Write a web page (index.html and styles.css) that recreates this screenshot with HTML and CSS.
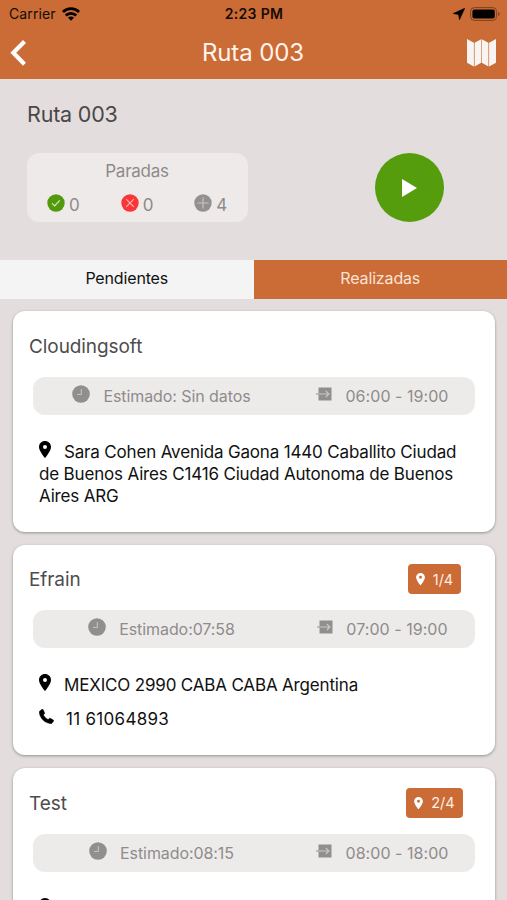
FILE: index.html
```html
<!DOCTYPE html>
<html lang="es">
<head>
  <meta charset="UTF-8" />
  <meta name="viewport" content="width=device-width, initial-scale=1.0" />
  <title>Ruta 003</title>
  <link rel="stylesheet" href="styles.css">
</head>
<body>
  <!-- Shared icons -->
  <svg class="sprite" aria-hidden="true">
    <symbol id="pin" viewBox="0 0 12 17">
      <path fill-rule="evenodd" d="M6 0C2.7 0 0 2.6 0 5.9C0 10 6 17 6 17S12 10 12 5.9C12 2.6 9.300 0 6 0ZM6 3.900A2 2 0 1 1 6 7.900A2 2 0 1 1 6 3.900Z" />
    </symbol>
    <symbol id="clock" viewBox="0 0 18 18">
      <circle cx="9" cy="9" r="8.800" />
      <path d="M9.300 4v5.500H5" fill="none" stroke="#c4c1c1" stroke-width="1.100" />
    </symbol>
    <symbol id="enter" viewBox="0 0 16 14">
      <path d="M2.500 0.500h13v13h-13z" />
      <path d="M0 7h3" stroke="#a5a2a2" stroke-width="1.300" />
      <path d="M3 7h10M9.800 4l3.200 3-3.200 3" fill="none" stroke="#cbc8c8" stroke-width="1.100" />
    </symbol>
  </svg>

  <header>
    <div class="status-bar">
      <div class="carrier">
        <span>Carrier</span>
        <svg width="18" height="14" viewBox="0 0 18 14">
          <g fill="none" stroke="#000" stroke-width="2.800">
            <path d="M0.900 5a11.500 11.500 0 0 1 16.200 0" />
            <path d="M3.800 8.500a7.400 7.400 0 0 1 10.400 0" />
          </g>
          <path d="M9 13.800l-3-3a4.200 4.200 0 0 1 6 0z" />
        </svg>
      </div>
      <div class="clock">2:23 PM</div>
      <div class="battery">
        <svg width="12" height="12" viewBox="0 0 12 12">
          <path d="M11.700 0.300L0.300 5.500L5.500 6.500L6.500 11.700Z" stroke="#000" stroke-width="0.600" />
        </svg>
        <svg width="30" height="14" viewBox="0 0 30 14">
          <rect x="0.600" y="0.600" width="26" height="12.800" rx="3.800" fill="none" stroke="#7d401f" stroke-width="1" />
          <rect x="2.400" y="2.400" width="22.400" height="9.200" rx="2" />
          <path d="M28.200 5v4q1.500-.7 1.500-2t-1.500-2z" fill="#7d401f" />
        </svg>
      </div>
    </div>
    <div class="nav-bar">
      <svg class="back" width="16" height="26" viewBox="0 0 16 26">
        <path d="M14.500 1.500L3.300 12.800L14.500 24.200" fill="none" stroke="#fff" stroke-width="4.200" />
      </svg>
      <h1>Ruta 003</h1>
      <svg class="map" width="29" height="28" viewBox="0 0 29 28">
        <path fill="#f8f4f2" d="M0 0L6.900 3.800V27.500L0 23.800ZM7.600 3.800L14.200 0.300V23.800L7.600 27.500ZM14.800 0.300L21.400 3.800V27.500L14.800 23.800ZM22.100 3.800L29 0V23.800L22.100 27.500Z" />
      </svg>
    </div>
  </header>

  <section class="summary">
    <h2>Ruta 003</h2>
    <div class="summary-row">
      <div class="stops">
        <div class="stops-title">Paradas</div>
        <div class="stops-counts">
          <div class="count">
            <svg width="18" height="18" viewBox="0 0 18 18">
              <circle cx="9" cy="9" r="8.700" fill="#529a0b" />
              <path d="M5 9.400l2.700 2.500 5-5.500" fill="none" stroke="#d6e8c3" stroke-width="1.200" />
            </svg>
            <span>0</span>
          </div>
          <div class="count">
            <svg width="18" height="18" viewBox="0 0 18 18">
              <circle cx="9" cy="9" r="8.700" fill="#fa3638" />
              <path d="M5.200 5.200l7.600 7.600M12.800 5.200l-7.600 7.600" stroke="#ffb9b5" stroke-width="1.100" />
            </svg>
            <span>0</span>
          </div>
          <div class="count">
            <svg width="18" height="18" viewBox="0 0 18 18">
              <circle cx="9" cy="9" r="8.700" fill="#929090" />
              <path d="M9 3.500v11M3.500 9h11" stroke="#c5c2c2" stroke-width="1.200" />
            </svg>
            <span>4</span>
          </div>
        </div>
      </div>
      <button class="play">
        <svg width="16" height="18" viewBox="0 0 16 18"><path d="M0 0L15 9L0 18Z" fill="#fff" /></svg>
      </button>
    </div>
  </section>

  <nav class="tabs">
    <div class="tab">Pendientes</div>
    <div class="tab active">Realizadas</div>
  </nav>

  <main>
    <article class="card">
      <div class="card-head">
        <h3>Cloudingsoft</h3>
      </div>
      <div class="times">
        <div class="time">
          <svg class="icon-clock"><use href="#clock" /></svg>
          <span>Estimado: Sin datos</span>
        </div>
        <div class="time">
          <svg class="icon-enter"><use href="#enter" /></svg>
          <span>06:00 - 19:00</span>
        </div>
      </div>
      <p class="address"><svg class="icon-pin"><use href="#pin" /></svg>Sara Cohen Avenida Gaona 1440 Caballito Ciudad<br>de Buenos Aires C1416 Ciudad Autonoma de Buenos<br>Aires ARG</p>
    </article>

    <article class="card">
      <div class="card-head">
        <h3>Efrain</h3>
        <div class="badge-cell">
          <span class="badge"><svg><use href="#pin" /></svg>1/4</span>
        </div>
      </div>
      <div class="times">
        <div class="time">
          <svg class="icon-clock"><use href="#clock" /></svg>
          <span>Estimado:07:58</span>
        </div>
        <div class="time">
          <svg class="icon-enter"><use href="#enter" /></svg>
          <span>07:00 - 19:00</span>
        </div>
      </div>
      <p class="address"><svg class="icon-pin"><use href="#pin" /></svg>MEXICO 2990 CABA CABA Argentina</p>
      <p class="phone">
        <svg width="15" height="15" viewBox="0 0 15 15"><path d="M0.500 2.200L3 0.200Q3.700-.1 4.100.6L5.600 3.700Q5.900 4.500 5.300 5L4.400 5.900Q6 8.800 9.100 10.600L10.100 9.500Q10.700 9 11.400 9.300L14.300 10.900Q15 11.300 14.700 12.100L13 14.200Q12.500 14.800 11.500 14.700C5 13.600 1.200 9.500 0.200 3.600Q0 2.700 0.500 2.200Z" stroke="#000" stroke-width="0.400" /></svg>
        <span>11 61064893</span>
      </p>
    </article>

    <article class="card">
      <div class="card-head">
        <h3>Test</h3>
        <div class="badge-cell">
          <span class="badge"><svg><use href="#pin" /></svg>2/4</span>
        </div>
      </div>
      <div class="times">
        <div class="time">
          <svg class="icon-clock"><use href="#clock" /></svg>
          <span>Estimado:08:15</span>
        </div>
        <div class="time">
          <svg class="icon-enter"><use href="#enter" /></svg>
          <span>08:00 - 18:00</span>
        </div>
      </div>
      <p class="address"><svg class="icon-pin"><use href="#pin" /></svg></p>
    </article>
  </main>
</body>
</html>
```
FILE: styles.css
```css
* {
  box-sizing: border-box;
}

body {
  font-family: Inter, "Liberation Sans", sans-serif;
  display: flex;
  flex-direction: column;
  margin: 0;
  height: 100vh;
  background: #e3dddd;
  color: #111;
}

h1, h2, h3, p {
  margin: 0;
  font-weight: 400;
}

svg {
  display: block;
  flex: none;
}

.sprite {
  display: none;
}

header {
  flex: none;
  height: 79px;
  background: #cb6b35;
}

.status-bar {
  display: grid;
  grid-template-columns: 1fr auto 1fr;
  align-items: center;
  height: 27px;
  padding: 0 7px 0 9px;
  font-size: 14px;
  color: #140b05;
}

.carrier,
.battery {
  display: flex;
  align-items: center;
  gap: 6px;
  letter-spacing: 0.1px;
}

.battery {
  justify-content: flex-end;
  gap: 5px;
}

.clock {
  padding-right: 1px;
  font-weight: 600;
  letter-spacing: 0.3px;
}

.nav-bar {
  display: grid;
  grid-template-columns: 40px 1fr 40px;
  align-items: center;
  height: 50px;
  padding: 0 11px 0 10px;
}

.nav-bar h1 {
  font-size: 24px;
  line-height: 51px;
  letter-spacing: -0.1px;
  text-align: center;
  color: #fff5ee;
}

.map {
  justify-self: end;
}

.summary {
  flex: none;
  height: 181px;
  padding: 21px 63px 0 27px;
}

.summary h2 {
  font-size: 21.500px;
  line-height: 28px;
  letter-spacing: -0.200px;
  color: #4b4849;
}

.summary-row {
  display: flex;
  justify-content: space-between;
  margin-top: 25px;
}

.stops {
  width: 221px;
  height: 69px;
  padding-top: 7px;
  border-radius: 12px;
  background: #edeae9;
  color: #8d8a8a;
}

.stops-title {
  padding-right: 1px;
  font-size: 17px;
  line-height: 22px;
  letter-spacing: -0.250px;
  text-align: center;
}

.stops-counts {
  display: grid;
  grid-template-columns: repeat(3, 1fr);
  margin-top: 11px;
  font-size: 17px;
  line-height: 24px;
}

.count {
  display: flex;
  justify-content: center;
  gap: 4px;
  padding-right: 1px;
}

.count svg {
  margin-top: 1px;
}

.play {
  display: flex;
  align-items: center;
  justify-content: center;
  width: 69px;
  height: 69px;
  padding: 0;
  border: none;
  border-radius: 50%;
  background: #559d0c;
}

.tabs {
  display: grid;
  flex: none;
  grid-template-columns: 1fr 1fr;
  height: 39px;
  font-size: 16px;
  line-height: 36px;
  letter-spacing: -0.150px;
  text-align: center;
}

.tab {
  background: #f4f4f4;
}

.tab.active {
  background: #cb6b35;
  color: #fbe3d5;
}

main {
  flex: 1;
  min-height: 0;
  padding: 12px 12px 0 13px;
  overflow: hidden;
}

.card {
  margin-bottom: 13px;
  padding: 18px 20px 25px;
  border-radius: 12px;
  background: #fff;
  box-shadow: 0 1px 3px rgba(0, 0, 0, 0.35);
}

.card-head {
  display: flex;
  align-items: center;
  justify-content: space-between;
  height: 33.500px;
  padding-left: 16px;
  margin: 0 0 14px -20px;
}

.card-head h3 {
  padding-top: 1px;
  font-size: 19px;
  letter-spacing: -0.080px;
  color: #4f4c4d;
}

.badge-cell {
  display: flex;
  justify-content: center;
  width: 81px;
}

.badge {
  display: flex;
  align-items: center;
  gap: 8px;
  height: 30px;
  padding: 0 8px;
  border-radius: 4px;
  background: #cb6b35;
  color: #fff0e6;
  font-size: 14.500px;
}

.badge svg {
  width: 9px;
  height: 12.500px;
  fill: #fff;
}

.times {
  display: grid;
  grid-template-columns: 257px 1fr;
  align-items: center;
  height: 38px;
  border-radius: 12px;
  background: #edeaea;
  color: #8f8c8c;
  font-size: 16px;
}

.time {
  display: flex;
  align-items: center;
  justify-content: center;
  gap: 13px;
}

.time span {
  letter-spacing: -0.080px;
}

.time:last-child span {
  letter-spacing: 0.050px;
}

.icon-clock,
.icon-enter {
  width: 18px;
  height: 18px;
  margin-bottom: 4px;
  fill: #918e8e;
}

.icon-enter {
  width: 16px;
  height: 14px;
}

.address {
  margin-top: 26px;
  padding-left: 6px;
  font-size: 17px;
  line-height: 22px;
  letter-spacing: -0.170px;
  white-space: nowrap;
}

.icon-pin {
  display: inline-block;
  width: 12px;
  height: 17px;
  margin-right: 13px;
}

.phone {
  display: flex;
  gap: 12px;
  margin-top: 12px;
  padding-left: 6px;
  font-size: 17px;
  line-height: 22px;
  letter-spacing: 0.300px;
}

.phone svg {
  margin-top: 1px;
}
```
